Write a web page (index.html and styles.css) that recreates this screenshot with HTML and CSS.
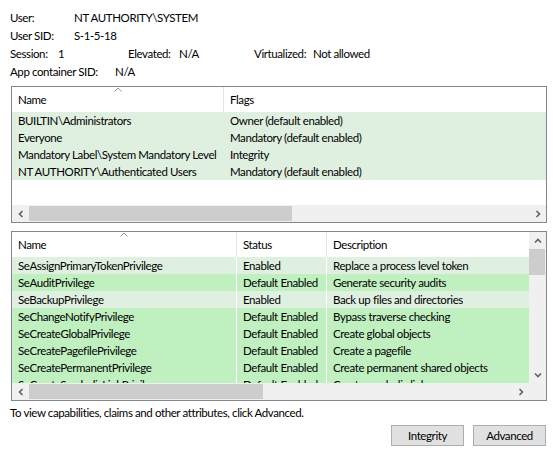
FILE: index.html
```html
<!DOCTYPE html>
<html>
<head>
<meta charset="utf-8">
<link rel="stylesheet" href="styles.css">
</head>
<body>
<div class="dialog">
  <div class="info">
    <div class="info-row"><span class="lbl w64">User:</span><span>NT AUTHORITY\SYSTEM</span></div>
    <div class="info-row"><span class="lbl w64">User SID:</span><span>S-1-5-18</span></div>
    <div class="info-row">
      <div class="cell c1"><span class="lbl w48">Session:</span><span>1</span></div>
      <div class="cell c2"><span class="lbl w51">Elevated:</span><span>N/A</span></div>
      <div class="cell"><span class="lbl w59">Virtualized:</span><span>Not allowed</span></div>
    </div>
    <div class="info-row"><span class="lbl w105">App container SID:</span><span>N/A</span></div>
  </div>

  <div class="listbox groups">
    <div class="viewport">
      <div class="lv-header">
        <div class="hcell g-name">Name<svg class="sort" width="8" height="5" viewBox="0 0 8 5"><polyline points="0.5,4.5 4,1 7.5,4.5" fill="none" stroke="#9a9a9a" stroke-width="1"/></svg></div>
        <div class="hcell g-flags nodiv">Flags</div>
      </div>
      <div class="row light"><div class="cell g-name">BUILTIN\Administrators</div><div class="cell g-flags">Owner (default enabled)</div></div>
      <div class="row light"><div class="cell g-name">Everyone</div><div class="cell g-flags">Mandatory (default enabled)</div></div>
      <div class="row light"><div class="cell g-name">Mandatory Label\System Mandatory Level</div><div class="cell g-flags">Integrity</div></div>
      <div class="row light"><div class="cell g-name">NT AUTHORITY\Authenticated Users</div><div class="cell g-flags">Mandatory (default enabled)</div></div>
    </div>
    <div class="hscroll">
      <div class="sbtn"><svg width="8" height="8" viewBox="0 0 8 8"><polyline points="5.5,1 2.5,4 5.5,7" fill="none" stroke="#606060" stroke-width="1.6"/></svg></div>
      <div class="htrack"><div class="hthumb t1"></div></div>
      <div class="sbtn"><svg width="8" height="8" viewBox="0 0 8 8"><polyline points="2.5,1 5.5,4 2.5,7" fill="none" stroke="#606060" stroke-width="1.6"/></svg></div>
    </div>
  </div>

  <div class="listbox privs">
    <div class="viewport">
      <div class="lv-header">
        <div class="hcell p-name">Name<svg class="sort" width="8" height="5" viewBox="0 0 8 5"><polyline points="0.5,4.5 4,1 7.5,4.5" fill="none" stroke="#9a9a9a" stroke-width="1"/></svg></div>
        <div class="hcell p-status">Status</div>
        <div class="hcell p-desc nodiv">Description</div>
      </div>
      <div class="row light"><div class="cell p-name">SeAssignPrimaryTokenPrivilege</div><div class="cell p-status">Enabled</div><div class="cell p-desc">Replace a process level token</div></div>
      <div class="row green"><div class="cell p-name">SeAuditPrivilege</div><div class="cell p-status">Default Enabled</div><div class="cell p-desc">Generate security audits</div></div>
      <div class="row light"><div class="cell p-name">SeBackupPrivilege</div><div class="cell p-status">Enabled</div><div class="cell p-desc">Back up files and directories</div></div>
      <div class="row green"><div class="cell p-name">SeChangeNotifyPrivilege</div><div class="cell p-status">Default Enabled</div><div class="cell p-desc">Bypass traverse checking</div></div>
      <div class="row green"><div class="cell p-name">SeCreateGlobalPrivilege</div><div class="cell p-status">Default Enabled</div><div class="cell p-desc">Create global objects</div></div>
      <div class="row green"><div class="cell p-name">SeCreatePagefilePrivilege</div><div class="cell p-status">Default Enabled</div><div class="cell p-desc">Create a pagefile</div></div>
      <div class="row green"><div class="cell p-name">SeCreatePermanentPrivilege</div><div class="cell p-status">Default Enabled</div><div class="cell p-desc">Create permanent shared objects</div></div>
      <div class="row green"><div class="cell p-name">SeCreateSymbolicLinkPrivilege</div><div class="cell p-status">Default Enabled</div><div class="cell p-desc">Create symbolic links</div></div>
    </div>
    <div class="vscroll">
      <div class="sbtn"><svg width="8" height="8" viewBox="0 0 8 8"><polyline points="1,5.5 4,2.5 7,5.5" fill="none" stroke="#606060" stroke-width="1.6"/></svg></div>
      <div class="vtrack"><div class="vthumb"></div></div>
      <div class="sbtn"><svg width="8" height="8" viewBox="0 0 8 8"><polyline points="1,2.5 4,5.5 7,2.5" fill="none" stroke="#606060" stroke-width="1.6"/></svg></div>
    </div>
    <div class="hscroll">
      <div class="sbtn"><svg width="8" height="8" viewBox="0 0 8 8"><polyline points="5.5,1 2.5,4 5.5,7" fill="none" stroke="#606060" stroke-width="1.6"/></svg></div>
      <div class="htrack"><div class="hthumb t2"></div></div>
      <div class="sbtn"><svg width="8" height="8" viewBox="0 0 8 8"><polyline points="2.5,1 5.5,4 2.5,7" fill="none" stroke="#606060" stroke-width="1.6"/></svg></div>
    </div>
    <div class="corner"></div>
  </div>

  <div class="hint">To view capabilities, claims and other attributes, click Advanced.</div>
  <div class="buttons">
    <button class="btn">Integrity</button>
    <button class="btn">Advanced</button>
  </div>
</div>
</body>
</html>
```

FILE: styles.css
```css
* { box-sizing: border-box; }
html, body { margin: 0; padding: 0; background: #fff; }
body {
  width: 553px;
  height: 454px;
  overflow: hidden;
  font-family: "Lato", "Liberation Sans", sans-serif;
  font-size: 11.5px;
  letter-spacing: -0.4px;
  color: #000;
}
.dialog {
  padding: 9px 6px 0 10px;
  display: flex;
  flex-direction: column;
}
.info { display: flex; flex-direction: column; }
.info-row {
  height: 18px;
  line-height: 18px;
  display: flex;
  white-space: nowrap;
}
.lbl { display: inline-block; }
.w64 { width: 64px; }
.w48 { width: 48px; }
.w51 { width: 51px; }
.w59 { width: 59px; }
.w105 { width: 105px; }
.info-row .cell { display: flex; }
.c1 { width: 118px; }
.c2 { width: 126px; }

.listbox {
  margin-left: 1px;
  border: 1px solid #828790;
  background: #fff;
  width: 536px;
}
.groups {
  margin-top: 5px;
  height: 137px;
  display: flex;
  flex-direction: column;
}
.groups .viewport { flex: 1; overflow: hidden; }
.privs {
  margin-top: 8px;
  height: 170px;
  display: grid;
  grid-template-columns: 517px 17px;
  grid-template-rows: 151px 17px;
}
.privs .viewport { overflow: hidden; }

.lv-header {
  display: flex;
  height: 25px;
  line-height: 25px;
  white-space: nowrap;
}
.hcell {
  position: relative;
  flex: none;
  padding-left: 6px;
  border-right: 1px solid #e5e5e5;
}
.hcell.nodiv { border-right: none; flex: 1; }
.sort {
  position: absolute;
  top: 0;
  left: 50%;
  margin-left: -4px;
}
.row {
  display: flex;
  height: 17px;
  line-height: 17px;
  white-space: nowrap;
}
.row .cell {
  flex: none;
  padding-left: 6px;
  overflow: hidden;
}
.light { background: #e0f0e0; }
.green { background: #c0f0c0; }
.g-name { width: 212px; }
.g-flags { flex: 1 !important; }
.privs .row .cell { border-right: 1px solid #fff; }
.p-name { width: 225px; }
.p-status { width: 90px; }
.p-desc { flex: 1 !important; border-right: none !important; }

.hscroll {
  height: 17px;
  background: #f0f0f0;
  display: flex;
}
.vscroll {
  grid-column: 2;
  grid-row: 1;
  background: #f0f0f0;
  display: flex;
  flex-direction: column;
}
.privs .hscroll { grid-column: 1; grid-row: 2; }
.corner { grid-column: 2; grid-row: 2; background: #f0f0f0; }
.sbtn {
  width: 17px;
  height: 17px;
  flex: none;
  display: flex;
  align-items: center;
  justify-content: center;
}
.htrack { flex: 1; padding: 1px 0; }
.hthumb { height: 15px; background: #cdcdcd; }
.t1 { width: 263px; }
.t2 { width: 234px; }
.vtrack { flex: 1; padding: 0 1px 0 0; }
.vthumb { height: 26px; background: #cdcdcd; }

.hint {
  margin-top: 3px;
  height: 18px;
  line-height: 18px;
  white-space: nowrap;
}
.buttons {
  margin-top: 3px;
  display: flex;
  justify-content: flex-end;
  gap: 9px;
  padding-right: 1px;
}
.btn {
  width: 73px;
  height: 21px;
  margin: 0;
  padding: 0;
  border: 1px solid #adadad;
  background: #e1e1e1;
  font-family: "Lato", "Liberation Sans", sans-serif;
  font-size: 11.5px;
  letter-spacing: -0.4px;
  color: #000;
}
```
